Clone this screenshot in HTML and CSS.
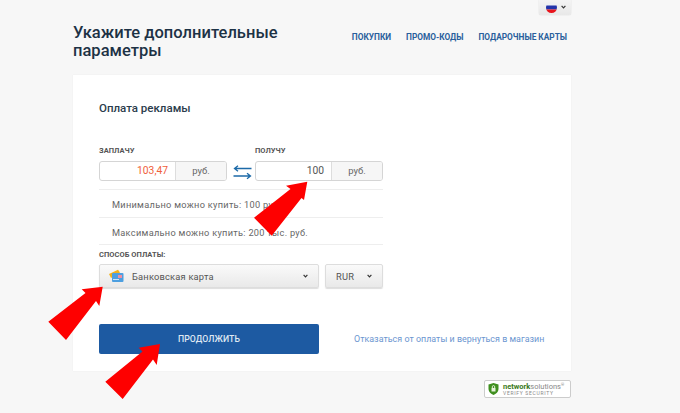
FILE: index.html
```html
<!DOCTYPE html>
<html lang="ru">
<head>
<meta charset="utf-8">
<title>Оплата рекламы</title>
<link rel="stylesheet" href="styles.css">
</head>
<body>
<div class="page">
  <div class="topbar">
    <button class="lang">
      <svg class="flag" width="13" height="13" viewBox="0 0 13 13"><clipPath id="fc"><circle cx="6.5" cy="6.5" r="5.5"/></clipPath><g clip-path="url(#fc)"><rect width="13" height="4.5" fill="#eef0f4"/><rect y="4.5" width="13" height="4" fill="#2233aa"/><rect y="8.5" width="13" height="4.5" fill="#e8141c"/></g></svg>
      <svg class="caret" width="5" height="4" viewBox="0 0 5 4"><path d="M.6.8 2.5 2.8 4.4.8" fill="none" stroke="#333" stroke-width="1.2"/></svg>
    </button>
  </div>
  <header class="head">
    <h1 class="title">Укажите дополнительные параметры</h1>
    <nav class="nav">
      <a>ПОКУПКИ</a>
      <a>ПРОМО-КОДЫ</a>
      <a>ПОДАРОЧНЫЕ КАРТЫ</a>
    </nav>
  </header>
  <main class="card">
    <h2 class="card-title">Оплата рекламы</h2>
    <div class="exchange">
      <div class="col">
        <div class="label">ЗАПЛАЧУ</div>
        <div class="field"><span class="value pay">103,47</span><span class="unit">руб.</span></div>
      </div>
      <svg class="swap" width="19" height="15" viewBox="0 0 19 15"><path d="M18.5 3.5H1.5M5 .8 1.5 3.5 5 6.2M.5 11h17M14 8.3l3.5 2.7L14 13.7" fill="none" stroke="#1c6aa8" stroke-width="1.3"/></svg>
      <div class="col">
        <div class="label">ПОЛУЧУ</div>
        <div class="field"><span class="value">100</span><span class="unit">руб.</span></div>
      </div>
    </div>
    <div class="notes">
      <div class="note">Минимально можно купить: 100 руб.</div>
      <div class="note">Максимально можно купить: 200 тыс. руб.</div>
    </div>
    <div class="label method">СПОСОБ ОПЛАТЫ:</div>
    <div class="selects">
      <div class="select wide">
        <svg class="cardicon" width="16" height="14" viewBox="0 0 16 14"><path d="M1 5 10 .8l2 2.7L3 9z" fill="#f3b21c"/><rect x="4" y="4" width="11.5" height="9" rx="1" fill="#4d9fe0"/><rect x="10" y="6" width="4" height="3" fill="#f08fa0"/><rect x="5" y="10" width="6" height="1" fill="#cfe6f8"/></svg>
        <span class="sel-text">Банковская карта</span>
        <svg class="caret" width="5" height="4" viewBox="0 0 5 4"><path d="M.6.8 2.5 2.8 4.4.8" fill="none" stroke="#333" stroke-width="1.2"/></svg>
      </div>
      <div class="select small">
        <span class="sel-text">RUR</span>
        <svg class="caret" width="5" height="4" viewBox="0 0 5 4"><path d="M.6.8 2.5 2.8 4.4.8" fill="none" stroke="#333" stroke-width="1.2"/></svg>
      </div>
    </div>
    <div class="actions">
      <button class="submit">ПРОДОЛЖИТЬ</button>
      <a class="cancel">Отказаться от оплаты и вернуться в магазин</a>
    </div>
  </main>
  <footer class="foot">
    <div class="badge">
      <svg width="11" height="12" viewBox="0 0 11 12"><path d="M5.5 0 10.5 1.5V6c0 3-2.5 5-5 6-2.5-1-5-3-5-6V1.5z" fill="#3f8f1f"/><rect x="3.5" y="5" width="4" height="3.5" fill="#e8f2dc"/><path d="M4.3 5V3.8a1.2 1.2 0 0 1 2.4 0V5" fill="none" stroke="#e8f2dc"/></svg>
      <div class="badge-text">
        <div class="b1"><b>network</b>solutions<sup>®</sup></div>
        <div class="b2">VERIFY SECURITY</div>
      </div>
    </div>
  </footer>
  <svg class="arrows" width="680" height="413" viewBox="0 0 680 413">
    <polygon points="307.3,181.7 286,185.7 290.5,189 254,217.7 271.7,235.7 301.5,198 304,200" fill="#fe0000"/>
    <polygon points="102.7,286.7 81.7,289.3 85.5,293 48.3,321.7 66,340 96,301 99.3,306" fill="#fe0000"/>
    <polygon points="160,344 138.7,347.7 142.5,351.5 105.3,381.7 122.7,399 153,359.5 156.7,365" fill="#fe0000"/>
  </svg>
</div>
</body>
</html>
```
FILE: styles.css
```css
* { box-sizing: border-box; }
html, body { margin: 0; height: 100%; overflow: hidden; }
body { background: #f7f7f7; font-family: Roboto, "Liberation Sans", sans-serif; color: #555; }
.page { position: relative; width: 680px; height: 413px; padding: 0 109px 0 73px; }
.topbar { display: flex; justify-content: flex-end; height: 15px; }
.lang { width: 32px; height: 15px; padding: 0 0 1px; border: 0; border-radius: 0 0 2px 2px; background: linear-gradient(#f4f4f4, #e8e8e8); box-shadow: 0 0 1px #bbb; display: flex; align-items: center; justify-content: center; gap: 3px; }
.head { display: flex; justify-content: space-between; height: 60px; padding-top: 9px; }
.title { margin: 0; width: 230px; font-size: 16.5px; line-height: 18px; font-weight: 500; color: #1d3245; letter-spacing: .02px; }
.nav { display: flex; gap: 15px; padding: 7px 4px 0 0; font-size: 8.3px; line-height: 12px; font-weight: 700; color: #2a5f9c; }
.nav a { white-space: nowrap; }
.card { background: #fff; height: 296px; padding: 25px 26px 0; box-shadow: 0 0 1px #e8e8e8; }
.card-title { margin: 0; font-size: 11.5px; line-height: 16px; font-weight: 500; color: #2b3c4c; }
.exchange { display: flex; align-items: flex-end; margin-top: 30px; }
.col { width: 128px; }
.swap { margin: 0 3px 1px 6px; flex: none; }
.label { font-size: 7.5px; line-height: 10px; font-weight: 700; color: #555; letter-spacing: .05px; }
.field { display: flex; height: 20px; margin-top: 5px; border: 1px solid #d5d5d5; border-radius: 3px; font-size: 10px; line-height: 18px; }
.value { flex: 1; text-align: right; padding-right: 7px; font-size: 10.3px; color: #555; }
.value.pay { color: #f0603c; }
.unit { width: 51px; flex: none; text-align: center; background: #f6f6f6; border-left: 1px solid #ddd; border-radius: 0 2px 2px 0; color: #666; font-size: 9.5px; }
.notes { width: 284px; margin-top: 8px; border-top: 1px solid #eee; }
.note { height: 27.5px; padding: 8px 0 0 13px; border-bottom: 1px solid #eee; font-size: 9.2px; line-height: 13px; color: #666; letter-spacing: .3px; white-space: nowrap; }
.method { margin-top: 5px; }
.selects { display: flex; gap: 6px; margin-top: 4px; }
.select { height: 24px; display: flex; align-items: center; border: 1px solid #ddd; border-radius: 2px; background: linear-gradient(#fafafa, #e9e9e9); box-shadow: 0 1px 1px #ddd; font-size: 9.3px; color: #555; }
.wide { width: 220px; padding: 0 10px 0 8px; }
.small { width: 58px; padding: 0 10px; }
.cardicon { margin-right: 8px; }
.sel-text { flex: 1; letter-spacing: .2px; }
.actions { display: flex; align-items: center; margin-top: 36px; }
.submit { width: 220px; flex: none; height: 30px; border: 0; border-radius: 2px; background: #1d5aa2; color: #dfe8f2; font: 500 8.7px Roboto, sans-serif; letter-spacing: .1px; }
.cancel { margin-left: 35px; font-size: 8.9px; color: #6b95d0; letter-spacing: .03px; white-space: nowrap; }
.foot { display: flex; justify-content: flex-end; padding-top: 9px; }
.badge { width: 87px; height: 18px; display: flex; align-items: center; gap: 4px; padding-left: 3px; background: #fff; border: 1px solid #ccc; border-radius: 2px; }
.badge-text { line-height: 1; }
.b1 { font-size: 7.5px; line-height: 7px; color: #888; white-space: nowrap; }
.b1 b { color: #3b7a22; }
.b1 sup { font-size: 4px; line-height: 0; }
.b2 { font-size: 5px; line-height: 6px; color: #888; letter-spacing: .7px; white-space: nowrap; }
.arrows { position: absolute; left: 0; top: 0; pointer-events: none; }
```
